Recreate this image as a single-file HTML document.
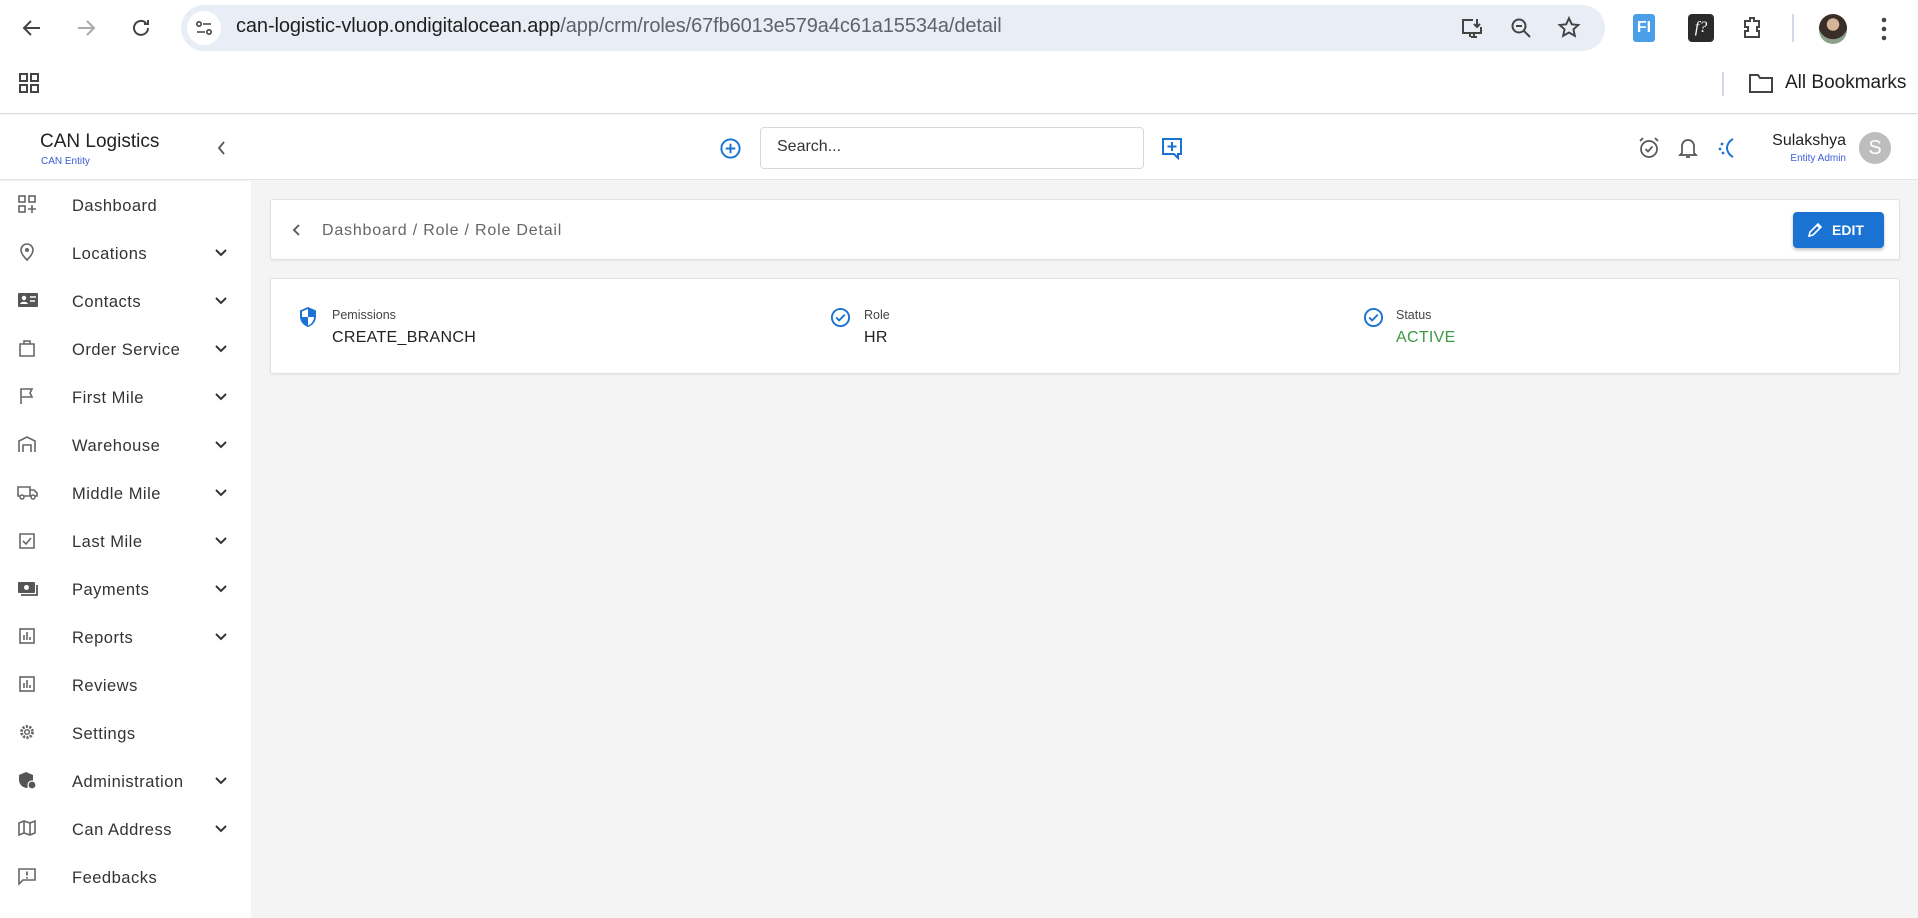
<!DOCTYPE html>
<html><head><meta charset="utf-8"><style>
*{box-sizing:border-box;margin:0;padding:0}
body{width:1918px;height:918px;overflow:hidden;font-family:"Liberation Sans",sans-serif;background:#f4f4f4;position:relative;color:#222}
.abs{position:absolute}
#chrome{left:0;top:0;width:1918px;height:114px;background:#fff;border-bottom:1px solid #dcdcdc}
#addr{left:181px;top:5px;width:1424px;height:46px;background:#e9eef6;border-radius:23px}
.url{left:236px;top:15px;font-size:20px;color:#1f1f1f;letter-spacing:-0.1px}
.url span{color:#5f6368}
#hdr{left:0;top:115px;width:1918px;height:65px;background:#fff;border-bottom:1px solid #e3e3e3}
#side{left:0;top:181px;width:251px;height:737px;background:#fff}
.item{position:absolute;left:0;width:251px;height:48px}
.item .t{position:absolute;left:72px;top:16px;font-size:16.5px;letter-spacing:0.5px;color:#333}
.item svg.i{position:absolute;left:17px;top:13px}
.item svg.c{position:absolute;left:214px;top:17px}
.card{background:#fff;border:1px solid #e2e2e2;border-radius:3px;box-shadow:0 1px 2px rgba(0,0,0,.06)}
.lbl{font-size:12.5px;color:#444}
.val{font-size:16px;color:#222;letter-spacing:0.3px}
</style></head><body>
<div id="chrome" class="abs">
 <svg class="abs" style="left:20px;top:16px" width="24" height="24" viewBox="0 0 24 24"><path d="M20 12H5M11 5l-7 7 7 7" fill="none" stroke="#444" stroke-width="2"/></svg>
 <svg class="abs" style="left:74px;top:16px" width="24" height="24" viewBox="0 0 24 24"><path d="M4 12h15M13 5l7 7-7 7" fill="none" stroke="#aaa" stroke-width="2"/></svg>
 <svg class="abs" style="left:129px;top:16px" width="24" height="24" viewBox="0 0 24 24"><path d="M19 12a7 7 0 1 1-2-5M19 4v4h-4" fill="none" stroke="#444" stroke-width="2"/></svg>
 <div id="addr" class="abs"></div>
 <div class="abs" style="left:187px;top:11px;width:34px;height:34px;border-radius:17px;background:#fff"></div>
 <svg class="abs" style="left:194px;top:18px" width="20" height="20" viewBox="0 0 20 20"><circle cx="5" cy="6" r="2.2" fill="none" stroke="#444" stroke-width="1.6"/><path d="M9 6h8M3 14h8" stroke="#444" stroke-width="1.6"/><circle cx="15" cy="14" r="2.2" fill="none" stroke="#444" stroke-width="1.6"/></svg>
 <div class="abs url">can-logistic-vluop.ondigitalocean.app<span>/app/crm/roles/67fb6013e579a4c61a15534a/detail</span></div>
 <svg class="abs" style="left:1459px;top:16px" width="26" height="26" viewBox="0 0 26 26"><path d="M14 4H4v13h18v-6M12 21h6M11 17v4M15 17v4" fill="none" stroke="#444" stroke-width="2"/><path d="M18 3v8M15 8l3 3 3-3" fill="none" stroke="#444" stroke-width="2"/></svg>
 <svg class="abs" style="left:1509px;top:16px" width="26" height="26" viewBox="0 0 26 26"><circle cx="10" cy="10" r="6.5" fill="none" stroke="#444" stroke-width="2"/><path d="M7 10h6M15 15l6 6" stroke="#444" stroke-width="2"/></svg>
 <svg class="abs" style="left:1556px;top:15px" width="26" height="26" viewBox="0 0 24 24"><path d="M12 3l2.6 5.6 6 .6-4.5 4 1.3 6L12 16.2 6.6 19.2l1.3-6-4.5-4 6-.6z" fill="none" stroke="#444" stroke-width="1.8"/></svg>
 <div class="abs" style="left:1633px;top:14px;width:22px;height:28px;background:#4a9fe8;border-radius:3px;color:#fff;font-weight:bold;font-size:16px;text-align:center;line-height:28px">FI</div>
 <div class="abs" style="left:1688px;top:14px;width:26px;height:28px;background:#2a2a2a;border-radius:4px;color:#fff;font-style:italic;font-size:16px;text-align:center;line-height:28px;font-family:'Liberation Serif',serif">f?</div>
 <svg class="abs" style="left:1740px;top:14px" width="26" height="28" viewBox="0 0 26 28"><path d="M5 7h5V4h4v3h5v6h-2v4h2v6H5v-6h3v-4H5z" fill="none" stroke="#444" stroke-width="2"/></svg>
 <div class="abs" style="left:1792px;top:14px;width:2px;height:28px;background:#d0daea"></div>
 <div class="abs" style="left:1819px;top:14px;width:28px;height:30px;border-radius:15px;background:radial-gradient(circle at 50% 35%,#d6b49a 0 25%,#3a2f28 27% 60%,#8aa08a 62%)"></div>
 <svg class="abs" style="left:1880px;top:16px" width="8" height="26" viewBox="0 0 8 26"><circle cx="4" cy="4" r="2.3" fill="#444"/><circle cx="4" cy="13" r="2.3" fill="#444"/><circle cx="4" cy="22" r="2.3" fill="#444"/></svg>
 <svg class="abs" style="left:18px;top:72px" width="22" height="22" viewBox="0 0 22 22"><g fill="none" stroke="#444" stroke-width="2"><rect x="2" y="2" width="7" height="7"/><rect x="13" y="2" width="7" height="7"/><rect x="2" y="13" width="7" height="7"/><rect x="13" y="13" width="7" height="7"/></g></svg>
 <div class="abs" style="left:1722px;top:72px;width:2px;height:24px;background:#d0daea"></div>
 <svg class="abs" style="left:1748px;top:72px" width="26" height="22" viewBox="0 0 26 22"><path d="M2 3h8l2 3h12v14H2z" fill="none" stroke="#444" stroke-width="2"/></svg>
 <div class="abs" style="left:1785px;top:72px;font-size:19px;color:#1f1f1f">All Bookmarks</div>
</div>

<div id="hdr" class="abs">
 <div class="abs" style="left:40px;top:16px;font-size:19px;color:#222">CAN Logistics</div>
 <div class="abs" style="left:41px;top:41px;font-size:10px;color:#3a5bd9">CAN Entity</div>
 <svg class="abs" style="left:215px;top:25px" width="14" height="16" viewBox="0 0 14 16"><path d="M9 2L4 8l5 6" fill="none" stroke="#555" stroke-width="1.8"/></svg>
 <svg class="abs" style="left:719px;top:22px" width="23" height="23" viewBox="0 0 24 24"><circle cx="12" cy="12" r="9.5" fill="none" stroke="#1a73d2" stroke-width="2"/><path d="M12 7v10M7 12h10" stroke="#1a73d2" stroke-width="2"/></svg>
 <div class="abs" style="left:760px;top:12px;width:384px;height:42px;border:1px solid #d8d8d8;border-radius:4px;background:#fff"></div>
 <div class="abs" style="left:777px;top:23px;font-size:16px;color:#333">Search...</div>
 <svg class="abs" style="left:1160px;top:21px" width="24" height="24" viewBox="0 0 24 24"><path d="M3 3h18v15h-3v4l-4-4H3z" fill="none" stroke="#1a73d2" stroke-width="2"/><path d="M12 6v9M7.5 10.5h9" stroke="#1a73d2" stroke-width="2"/></svg>
 <svg class="abs" style="left:1637px;top:21px" width="24" height="24" viewBox="0 0 24 24"><circle cx="12" cy="13" r="8" fill="none" stroke="#555" stroke-width="1.7"/><path d="M8.5 13l2.5 2.5 4.5-5M3 5l3-3M21 5l-3-3" fill="none" stroke="#555" stroke-width="1.7"/></svg>
 <svg class="abs" style="left:1677px;top:21px" width="22" height="24" viewBox="0 0 22 24"><path d="M5 17V10a6 6 0 0 1 12 0v7l2 2H3zM9 21h4" fill="none" stroke="#555" stroke-width="1.7"/></svg>
 <svg class="abs" style="left:1716px;top:21px" width="22" height="24" viewBox="0 0 22 24"><path d="M17 3c-4 2-6 6-6 9s2 7 6 9" fill="none" stroke="#1a73d2" stroke-width="2"/><circle cx="6" cy="8" r="1.4" fill="#1a73d2"/><circle cx="4" cy="13" r="1.4" fill="#1a73d2"/><circle cx="7" cy="17" r="1.4" fill="#1a73d2"/></svg>
 <div class="abs" style="left:1764px;top:17px;font-size:16px;color:#222;width:82px;text-align:right">Sulakshya</div>
 <div class="abs" style="left:1764px;top:38px;font-size:10px;color:#3a5bd9;width:82px;text-align:right">Entity Admin</div>
 <div class="abs" style="left:1859px;top:17px;width:32px;height:32px;border-radius:16px;background:#bdbdbd;color:#fff;font-size:20px;text-align:center;line-height:32px">S</div>
</div>

<div id="side" class="abs">
<div class="item" style="top:0"><svg class="i" width="20" height="20" viewBox="0 0 20 20"><g fill="none" stroke="#666" stroke-width="1.6"><rect x="2" y="2" width="6" height="6"/><rect x="12" y="2" width="6" height="6"/><rect x="2" y="12" width="6" height="6"/><path d="M15 11v8M11 15h8"/></g></svg><div class="t">Dashboard</div></div>
<div class="item" style="top:48px"><svg class="i" width="20" height="20" viewBox="0 0 20 20"><path d="M10 18c-4-4-6-7-6-10a6 6 0 0 1 12 0c0 3-2 6-6 10z" fill="none" stroke="#666" stroke-width="1.6"/><circle cx="10" cy="8" r="2" fill="#666"/></svg><div class="t">Locations</div><svg class="c" width="14" height="14" viewBox="0 0 14 14"><path d="M2 4l5 5 5-5" fill="none" stroke="#333" stroke-width="2"/></svg></div>
<div class="item" style="top:96px"><svg class="i" width="22" height="20" viewBox="0 0 22 20"><rect x="1" y="3" width="20" height="14" rx="1" fill="#555"/><circle cx="7" cy="8" r="2.2" fill="#fff"/><path d="M3 14c1-3 7-3 8 0z" fill="#fff"/><path d="M13 7h6M13 11h5" stroke="#fff" stroke-width="1.4"/></svg><div class="t">Contacts</div><svg class="c" width="14" height="14" viewBox="0 0 14 14"><path d="M2 4l5 5 5-5" fill="none" stroke="#333" stroke-width="2"/></svg></div>
<div class="item" style="top:144px"><svg class="i" width="20" height="20" viewBox="0 0 20 20"><path d="M3 6h14v12H3zM7 6V3h6v3" fill="none" stroke="#666" stroke-width="1.6"/></svg><div class="t">Order Service</div><svg class="c" width="14" height="14" viewBox="0 0 14 14"><path d="M2 4l5 5 5-5" fill="none" stroke="#333" stroke-width="2"/></svg></div>
<div class="item" style="top:192px"><svg class="i" width="20" height="20" viewBox="0 0 20 20"><path d="M4 18V3h11l-2 4 2 4H5" fill="none" stroke="#666" stroke-width="1.6"/></svg><div class="t">First Mile</div><svg class="c" width="14" height="14" viewBox="0 0 14 14"><path d="M2 4l5 5 5-5" fill="none" stroke="#333" stroke-width="2"/></svg></div>
<div class="item" style="top:240px"><svg class="i" width="20" height="20" viewBox="0 0 20 20"><path d="M2 18V7l8-4 8 4v11M6 18v-7h8v7" fill="none" stroke="#666" stroke-width="1.6"/></svg><div class="t">Warehouse</div><svg class="c" width="14" height="14" viewBox="0 0 14 14"><path d="M2 4l5 5 5-5" fill="none" stroke="#333" stroke-width="2"/></svg></div>
<div class="item" style="top:288px"><svg class="i" width="22" height="20" viewBox="0 0 22 20"><path d="M1 5h12v9H1zM13 8h4l3 3v3h-7" fill="none" stroke="#666" stroke-width="1.6"/><circle cx="5" cy="15" r="2" fill="#fff" stroke="#666" stroke-width="1.5"/><circle cx="16" cy="15" r="2" fill="#fff" stroke="#666" stroke-width="1.5"/></svg><div class="t">Middle Mile</div><svg class="c" width="14" height="14" viewBox="0 0 14 14"><path d="M2 4l5 5 5-5" fill="none" stroke="#333" stroke-width="2"/></svg></div>
<div class="item" style="top:336px"><svg class="i" width="20" height="20" viewBox="0 0 20 20"><path d="M3 4h14v14H3z" fill="none" stroke="#666" stroke-width="1.6"/><path d="M6 11l3 3 5-6" fill="none" stroke="#666" stroke-width="1.6"/></svg><div class="t">Last Mile</div><svg class="c" width="14" height="14" viewBox="0 0 14 14"><path d="M2 4l5 5 5-5" fill="none" stroke="#333" stroke-width="2"/></svg></div>
<div class="item" style="top:384px"><svg class="i" width="22" height="20" viewBox="0 0 22 20"><rect x="1" y="4" width="17" height="11" rx="1" fill="#555"/><circle cx="9.5" cy="9.5" r="2.5" fill="#fff"/><path d="M20 7v10H4" fill="none" stroke="#555" stroke-width="1.8"/></svg><div class="t">Payments</div><svg class="c" width="14" height="14" viewBox="0 0 14 14"><path d="M2 4l5 5 5-5" fill="none" stroke="#333" stroke-width="2"/></svg></div>
<div class="item" style="top:432px"><svg class="i" width="20" height="20" viewBox="0 0 20 20"><rect x="3" y="3" width="14" height="14" fill="none" stroke="#666" stroke-width="1.6"/><path d="M7 14V9M10 14V6M13 14v-3" stroke="#666" stroke-width="1.6"/></svg><div class="t">Reports</div><svg class="c" width="14" height="14" viewBox="0 0 14 14"><path d="M2 4l5 5 5-5" fill="none" stroke="#333" stroke-width="2"/></svg></div>
<div class="item" style="top:480px"><svg class="i" width="20" height="20" viewBox="0 0 20 20"><rect x="3" y="3" width="14" height="14" fill="none" stroke="#666" stroke-width="1.6"/><path d="M7 14V9M10 14V6M13 14v-3" stroke="#666" stroke-width="1.6"/></svg><div class="t">Reviews</div></div>
<div class="item" style="top:528px"><svg class="i" width="20" height="20" viewBox="0 0 20 20"><circle cx="10" cy="10" r="5.5" fill="none" stroke="#666" stroke-width="2.8" stroke-dasharray="2.2 1.3"/><circle cx="10" cy="10" r="2.3" fill="none" stroke="#666" stroke-width="1.5"/></svg><div class="t">Settings</div></div>
<div class="item" style="top:576px"><svg class="i" width="20" height="20" viewBox="0 0 20 20"><path d="M9 2l7 3v5c0 4-3 7-7 8-4-1-7-4-7-8V5z" fill="#555"/><circle cx="15" cy="15" r="4" fill="#555" stroke="#fff" stroke-width="1.2"/></svg><div class="t">Administration</div><svg class="c" width="14" height="14" viewBox="0 0 14 14"><path d="M2 4l5 5 5-5" fill="none" stroke="#333" stroke-width="2"/></svg></div>
<div class="item" style="top:624px"><svg class="i" width="20" height="20" viewBox="0 0 20 20"><path d="M2 5l5-2 6 2 5-2v12l-5 2-6-2-5 2zM7 3v12M13 5v12" fill="none" stroke="#666" stroke-width="1.6"/></svg><div class="t">Can Address</div><svg class="c" width="14" height="14" viewBox="0 0 14 14"><path d="M2 4l5 5 5-5" fill="none" stroke="#333" stroke-width="2"/></svg></div>
<div class="item" style="top:672px"><svg class="i" width="20" height="20" viewBox="0 0 20 20"><path d="M2 3h16v11H6l-4 4z" fill="none" stroke="#666" stroke-width="1.6"/><path d="M10 5.5v4M10 11v1.5" stroke="#666" stroke-width="1.8"/></svg><div class="t">Feedbacks</div></div>
</div>

<div class="abs card" style="left:270px;top:199px;width:1630px;height:61px">
 <svg class="abs" style="left:20px;top:23px" width="12" height="14" viewBox="0 0 12 14"><path d="M8 2L3 7l5 5" fill="none" stroke="#555" stroke-width="1.8"/></svg>
 <div class="abs" style="left:51px;top:22px;font-size:16px;color:#666;letter-spacing:0.8px">Dashboard / Role / Role Detail</div>
 <div class="abs" style="left:1522px;top:12px;width:91px;height:36px;background:#1a73d2;border-radius:4px;box-shadow:0 2px 3px rgba(0,0,0,.25);color:#fff;font-size:14px;font-weight:bold;line-height:36px;padding-left:39px">EDIT</div>
 <svg class="abs" style="left:1536px;top:22px" width="16" height="16" viewBox="0 0 16 16"><path d="M2 14l1-4 8-8 3 3-8 8zM10 3l3 3" fill="none" stroke="#fff" stroke-width="1.6"/></svg>
</div>

<div class="abs card" style="left:270px;top:278px;width:1630px;height:96px">
 <svg class="abs" style="left:27px;top:27px" width="20" height="22" viewBox="0 0 20 22"><path d="M10 1l8 3.5v6c0 5-3.5 9-8 10.5C5.5 19.5 2 15.5 2 10.5v-6z" fill="#1a73d2"/><path d="M10 3v8h6c0 4-3 7.5-6 8.5V11H4V5.5z" fill="#fff"/></svg>
 <div class="abs lbl" style="left:61px;top:29px">Pemissions</div>
 <div class="abs val" style="left:61px;top:50px">CREATE_BRANCH</div>
 <svg class="abs" style="left:559px;top:28px" width="21" height="21" viewBox="0 0 22 22"><circle cx="11" cy="11" r="9" fill="none" stroke="#1a73d2" stroke-width="2"/><path d="M6.5 11l3 3 6-6" fill="none" stroke="#1a73d2" stroke-width="2"/></svg>
 <div class="abs lbl" style="left:593px;top:29px">Role</div>
 <div class="abs val" style="left:593px;top:50px">HR</div>
 <svg class="abs" style="left:1092px;top:28px" width="21" height="21" viewBox="0 0 22 22"><circle cx="11" cy="11" r="9" fill="none" stroke="#1a73d2" stroke-width="2"/><path d="M6.5 11l3 3 6-6" fill="none" stroke="#1a73d2" stroke-width="2"/></svg>
 <div class="abs lbl" style="left:1125px;top:29px">Status</div>
 <div class="abs val" style="left:1125px;top:50px;color:#3c9a44">ACTIVE</div>
</div>
</body></html>
